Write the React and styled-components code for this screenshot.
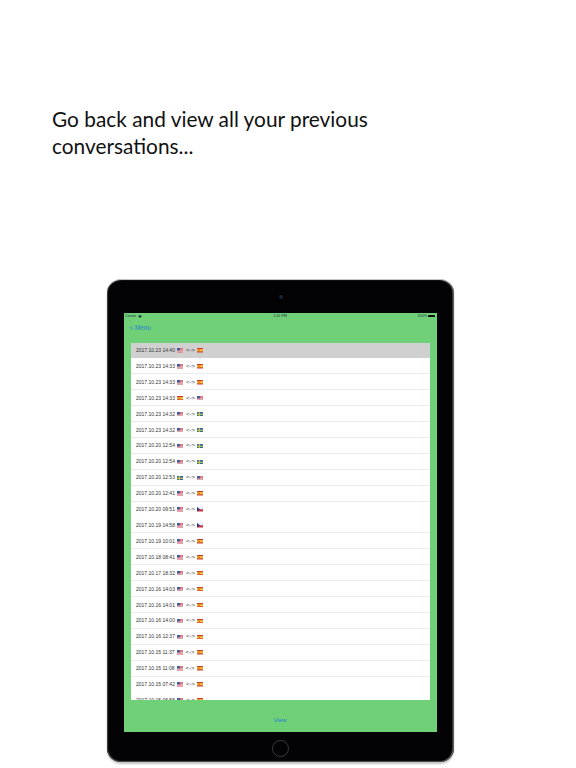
import React from "react";
import styled, { createGlobalStyle } from "styled-components";

const Global = createGlobalStyle`
  html, body { margin: 0; padding: 0; background: #fff; }
  #root { width: 576px; height: 768px; overflow: hidden; }
`;

const Page = styled.div`
  width: 576px;
  height: 768px;
  display: flex;
  flex-direction: column;
  box-sizing: border-box;
  padding-top: 105px;
`;

const Headline = styled.h1`
  margin: 0 0 120px 52px;
  width: 340px;
  height: 54px;
  font: 400 20.85px/27px Lato, "Open Sans", sans-serif;
  color: #111;
`;

const Tablet = styled.div`
  width: 347px;
  height: 483px;
  margin-left: 107px;
  box-sizing: border-box;
  padding: 33px 17px 30px 16.5px;
  background: #030306;
  border-radius: 14px;
  border-top: 1px solid #c4c4c4;
  box-shadow: inset -1.5px 0 1px #666, inset 1px 0 1px #444, inset 0 -1px 1px #555, 0 2px 2px #c4c4c4;
  position: relative;
`;

const Camera = styled.span`
  position: absolute;
  top: 15px;
  left: 172px;
  width: 4px;
  height: 4px;
  border-radius: 50%;
  background: #1a2233;
`;

const Home = styled.span`
  position: absolute;
  bottom: 5px;
  left: 165px;
  width: 15px;
  height: 15px;
  border-radius: 50%;
  border: 1px solid #3c3c3e;
`;

const Screen = styled.div`
  height: 100%;
  background: #6fd078;
  display: flex;
  flex-direction: column;
`;

const Status = styled.div`
  height: 6px;
  padding: 0 2px 0 1.5px;
  display: grid;
  grid-template-columns: 1fr auto 1fr;
  align-items: center;
  font: 3.7px/6px "Liberation Sans", sans-serif;
  color: #234;
`;

const StatusRight = styled.div`
  display: flex;
  justify-content: flex-end;
  align-items: center;
  gap: 1px;
`;

const StatusLeft = styled.div`
  display: flex;
  align-items: center;
  gap: 1.5px;
`;

const Battery = styled.span`
  width: 7px;
  height: 2.5px;
  background: #111;
  border-radius: .5px;
`;

const Nav = styled.div`
  height: 23.5px;
  padding: 3px 0 0 6px;
  box-sizing: border-box;
  font: 6.3px/12px "Liberation Sans", sans-serif;
  color: #2b7fd0;
`;

const List = styled.div`
  height: 357.5px;
  margin: 0 7px 0 7.5px;
  background: #fff;
  overflow: hidden;
`;

const Row = styled.div`
  box-sizing: border-box;
  height: 16px;
  border-bottom: 1px solid #ececec;
  margin-bottom: -0.1px;
  padding: 1px 0 0 5px;
  display: flex;
  align-items: center;
  gap: 2.5px;
  background: ${p => (p.$selected ? "#d0d0d0" : "#fff")};
  font: 5px/15px "Liberation Sans", sans-serif;
  color: #333;
`;

const Arrow = styled.span`
  font-size: 6px;
`;

const Footer = styled.div`
  flex: 1;
  padding-top: 8px;
  display: flex;
  align-items: center;
  justify-content: center;
  font: 6px "Liberation Sans", sans-serif;
  color: #2b7fd0;
`;

const Flag = ({ c }) => {
  const common = { width: 6, height: 4.5, viewBox: "0 0 12 9", style: { display: "block", flex: "none" } };
  if (c === "us")
    return (
      <svg {...common}>
        <rect width="12" height="9" fill="#f4f4f8" />
        <path d="M0 0h12v1.3H0zM0 2.6h12v1.3H0zM0 5.2h12v1.3H0zM0 7.7h12V9H0z" fill="#d8505c" />
        <rect width="6" height="5" fill="#4a5a9a" />
      </svg>
    );
  if (c === "es")
    return (
      <svg {...common}>
        <rect width="12" height="9" fill="#d8352a" />
        <rect y="2.3" width="12" height="4.4" fill="#f5c430" />
        <rect x="3" y="3" width="2" height="3" fill="#b5502a" />
      </svg>
    );
  if (c === "se")
    return (
      <svg {...common}>
        <rect width="12" height="9" fill="#2a6cb0" />
        <path d="M3.5 0h2v9h-2zM0 3.5h12v2H0z" fill="#f2cc30" />
      </svg>
    );
  return (
    <svg {...common}>
      <rect width="12" height="4.5" fill="#eef" />
      <rect y="4.5" width="12" height="4.5" fill="#d0303a" />
      <path d="M0 0l6 4.5L0 9z" fill="#1f3f80" />
    </svg>
  );
};

const rows = [
  ["2017.10.23 14:40", "us", "es"],
  ["2017.10.23 14:33", "us", "es"],
  ["2017.10.23 14:33", "us", "es"],
  ["2017.10.23 14:33", "es", "us"],
  ["2017.10.23 14:32", "us", "se"],
  ["2017.10.23 14:32", "us", "se"],
  ["2017.10.20 12:54", "us", "se"],
  ["2017.10.20 12:54", "us", "se"],
  ["2017.10.20 12:53", "se", "us"],
  ["2017.10.20 12:41", "us", "es"],
  ["2017.10.20 09:51", "us", "cz"],
  ["2017.10.19 14:58", "us", "cz"],
  ["2017.10.19 10:01", "us", "es"],
  ["2017.10.18 08:41", "us", "es"],
  ["2017.10.17 18:32", "us", "es"],
  ["2017.10.16 14:03", "us", "es"],
  ["2017.10.16 14:01", "us", "es"],
  ["2017.10.16 14:00", "us", "es"],
  ["2017.10.16 12:37", "us", "es"],
  ["2017.10.15 11:37", "us", "es"],
  ["2017.10.15 11:08", "us", "es"],
  ["2017.10.15 07:42", "us", "es"],
  ["2017.10.15 06:55", "us", "es"],
];

export default function App() {
  return (
    <Page>
      <Global />
      <Headline>Go back and view all your previous conversations...</Headline>
      <Tablet>
        <Camera />
        <Screen>
          <Status>
            <StatusLeft>
              <span>Carrier</span>
              <svg width="4" height="3" viewBox="0 0 8 6"><path d="M0 2q4-3 8 0L4 6z" fill="#234" /></svg>
            </StatusLeft>
            <span>2:41 PM</span>
            <StatusRight>
              <span>100%</span>
              <Battery />
            </StatusRight>
          </Status>
          <Nav>&lt; Menu</Nav>
          <List>
            {rows.map(([t, a, b], i) => (
              <Row key={i} $selected={i === 0}>
                <span>{t}</span>
                <Flag c={a} />
                <Arrow>&lt;-&gt;</Arrow>
                <Flag c={b} />
              </Row>
            ))}
          </List>
          <Footer>View</Footer>
        </Screen>
        <Home />
      </Tablet>
    </Page>
  );
}
